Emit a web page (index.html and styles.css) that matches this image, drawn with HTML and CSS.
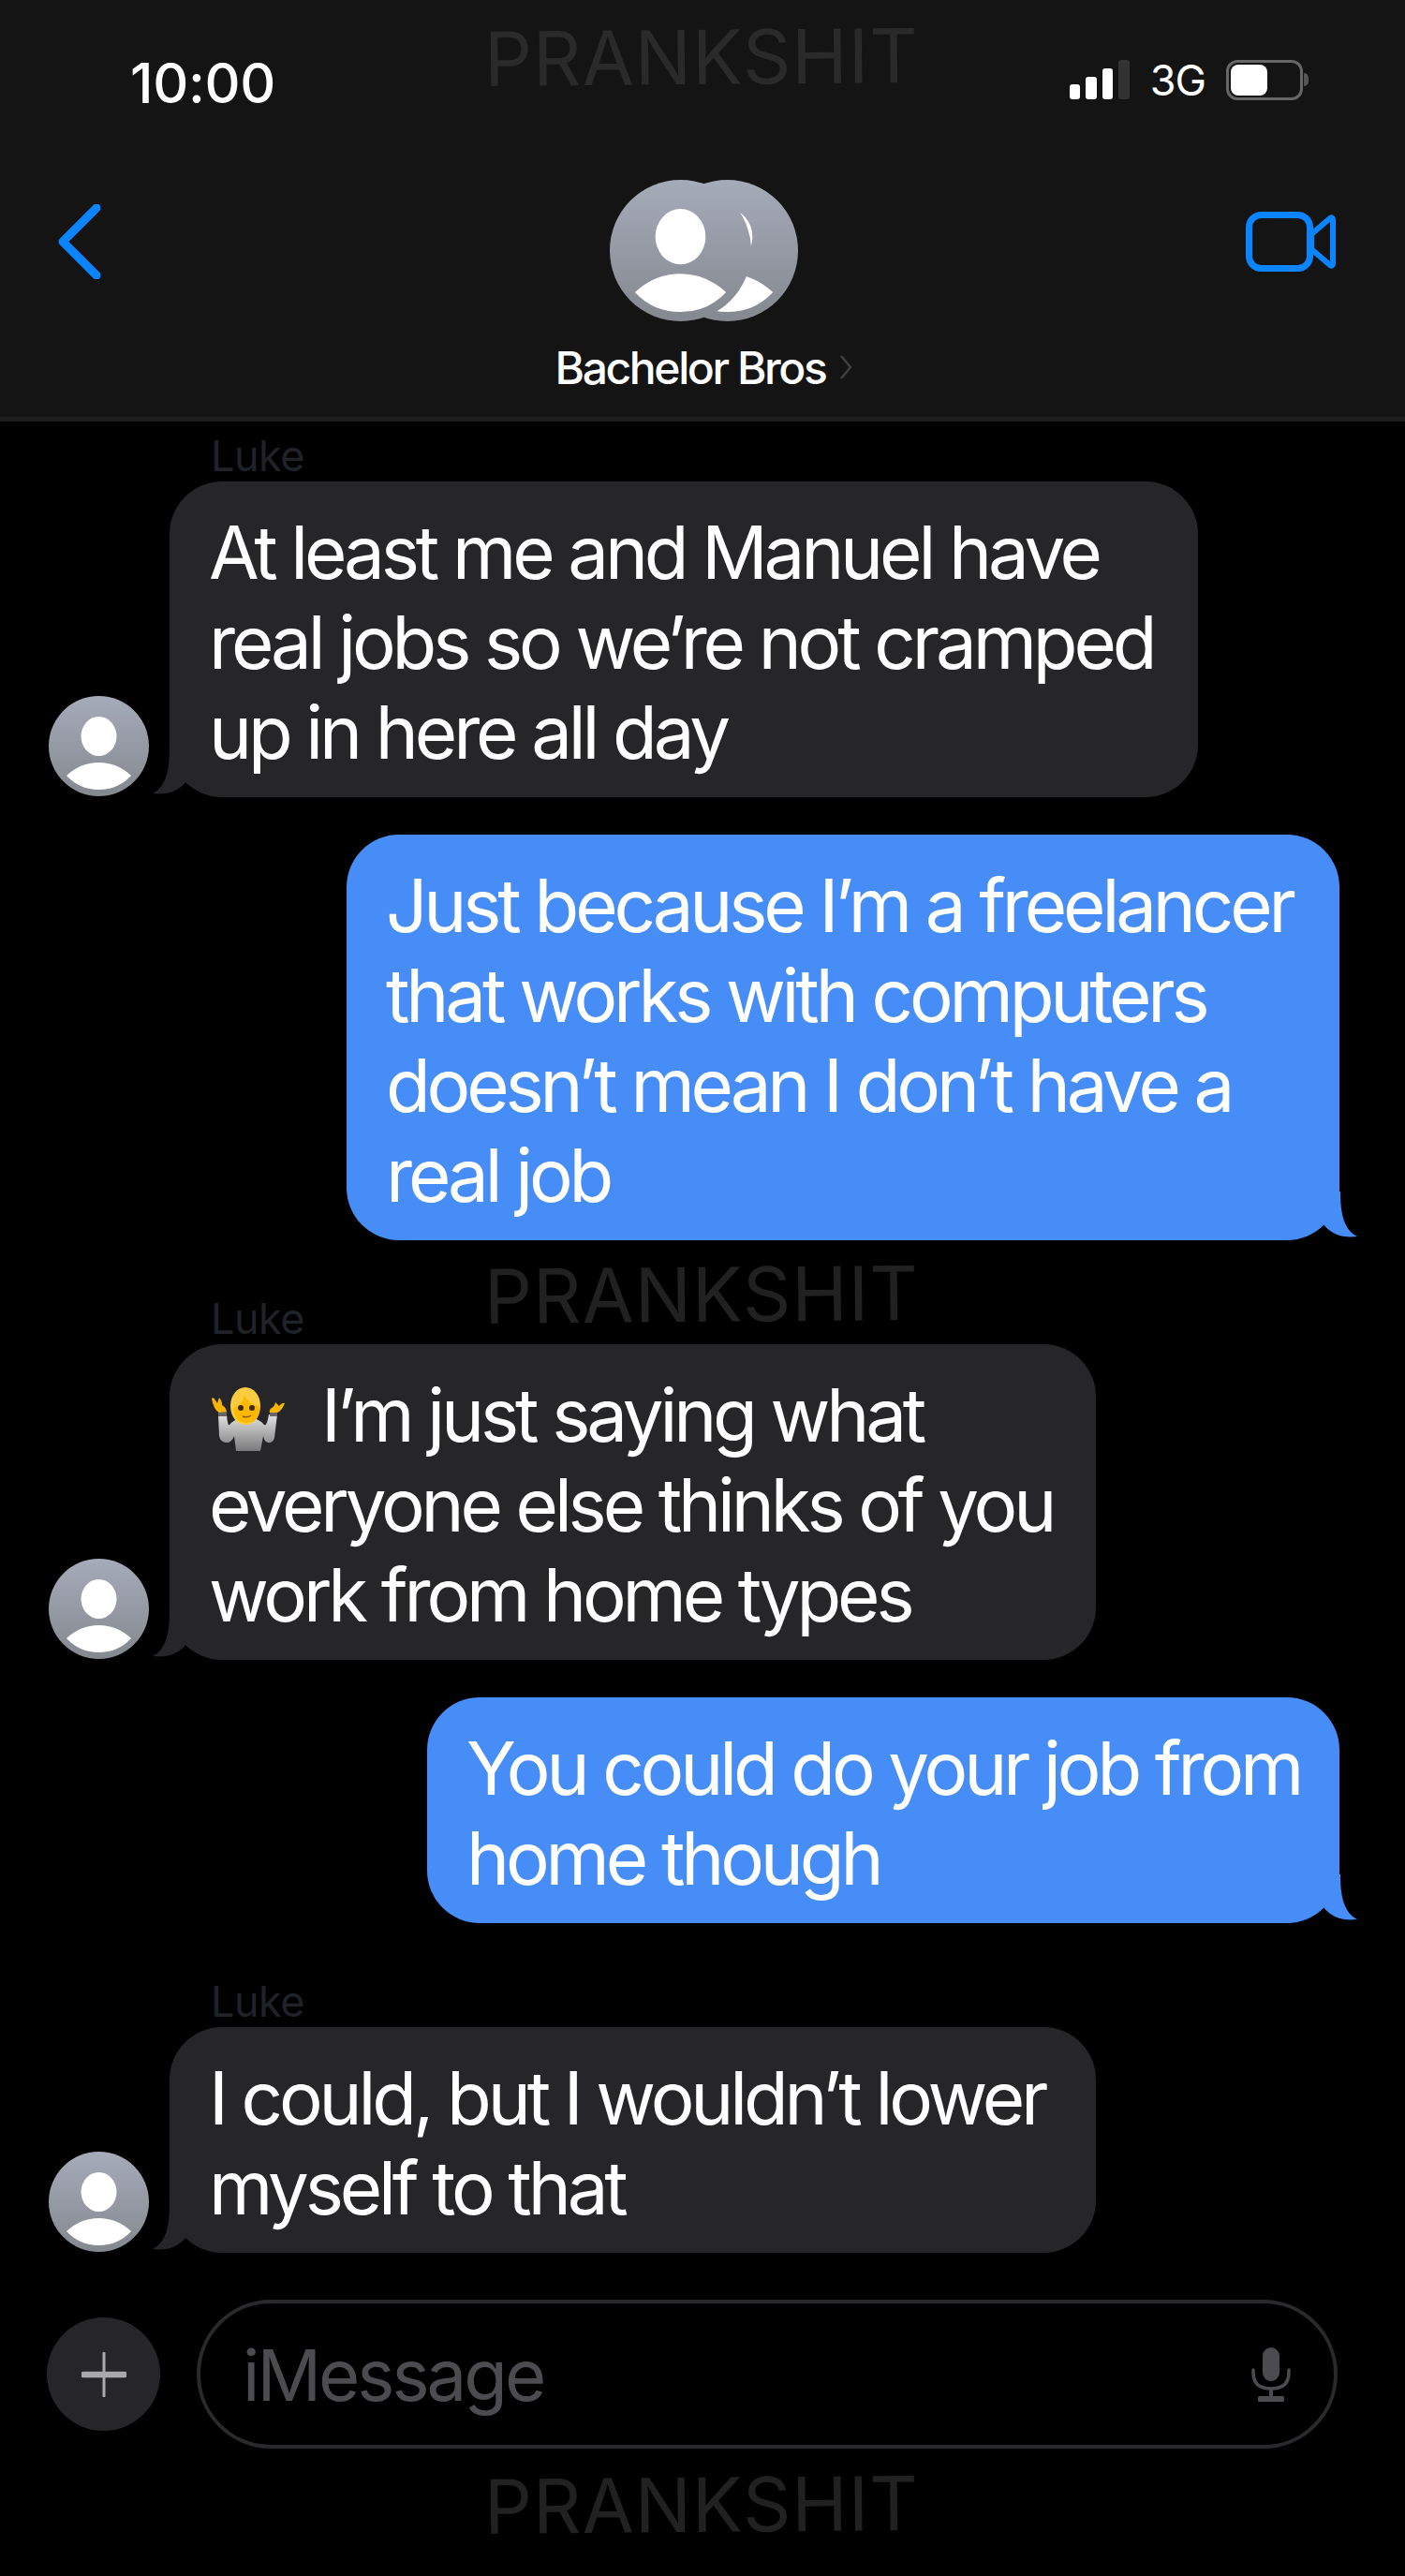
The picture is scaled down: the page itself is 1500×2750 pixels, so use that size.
FILE: index.html
```html
<!DOCTYPE html>
<html lang="en">
<head>
    <meta charset="UTF-8">
    <meta name="viewport" content="width=device-width, initial-scale=1.0">
    <title>Bachelor Bros</title>
    <link rel="stylesheet" href="styles.css">
</head>
<body>

    <!-- Shared drawings for the avatars and the bubble tail -->
    <svg class="defs" width="0" height="0">
        <defs>
            <linearGradient id="avatarFill" x1="0" y1="0" x2="0" y2="1">
                <stop offset="0" stop-color="#a6abb9"/>
                <stop offset="1" stop-color="#84888f"/>
            </linearGradient>
            <linearGradient id="sweater" x1="0" y1="0" x2="0" y2="1">
                <stop offset="0" stop-color="#e2e2e2"/>
                <stop offset="1" stop-color="#7a7a7a"/>
            </linearGradient>
            <symbol id="person" viewBox="0 0 107 107">
                <circle cx="53.5" cy="53.5" r="53.5" fill="url(#avatarFill)"/>
                <ellipse cx="53.5" cy="43" rx="19" ry="21" fill="#fff"/>
                <path d="M19 85 Q34 71 53.5 71 Q73 71 88 85 Q74 100 53.5 100 Q33 100 19 85 Z" fill="#fff"/>
            </symbol>
            <symbol id="tailShape" viewBox="0 0 50 50">
                <path d="M18 0 C18 24 14 41 0 48 C14 50 28 46 36 35 L50 20 L50 0 Z"/>
            </symbol>
        </defs>
    </svg>

    <div class="page">

        <header class="top">
            <div class="status">
                <span class="clock">10:00</span>
                <div class="status-right">
                    <div class="signal">
                        <i class="bar bar1"></i>
                        <i class="bar bar2"></i>
                        <i class="bar bar3"></i>
                        <i class="bar bar4"></i>
                    </div>
                    <span class="network">3G</span>
                    <div class="battery"><i class="battery-level"></i></div>
                    <i class="battery-nub"></i>
                </div>
            </div>

            <nav class="nav">
                <svg class="back" width="46" height="80" viewBox="0 0 46 80">
                    <path d="M41 4 L5 40 L41 76" fill="none" stroke="#0a84ff" stroke-width="9" stroke-linecap="round" stroke-linejoin="round"/>
                </svg>
                <div class="contact">
                    <svg width="201" height="151" viewBox="0 0 201 151">
                        <use href="#person" x="50" y="0" width="151" height="151"/>
                        <use href="#person" x="0" y="0" width="151" height="151"/>
                    </svg>
                    <div class="contact-name">
                        Bachelor Bros
                        <svg width="14" height="28" viewBox="0 0 14 28">
                            <path d="M2 2 L12 14 L2 26" fill="none" stroke="#3f3f3f" stroke-width="2.5"/>
                        </svg>
                    </div>
                </div>
                <svg class="video" width="96" height="64" viewBox="0 0 96 64">
                    <rect x="3.5" y="3.5" width="65" height="57" rx="13" fill="none" stroke="#0a84ff" stroke-width="7"/>
                    <path d="M70 24 L90 7 Q93 5 93 9 L93 55 Q93 59 90 57 L70 40 Z" fill="none" stroke="#0a84ff" stroke-width="6" stroke-linejoin="round"/>
                </svg>
            </nav>
        </header>

        <main class="thread">

            <div class="msg msg-in">
                <div class="sender">Luke</div>
                <div class="row">
                    <svg class="avatar"><use href="#person"/></svg>
                    <div class="bubble bubble-in width-a">
                        At least me and Manuel have<br>real jobs so we’re not cramped<br>up in here all day
                        <svg class="tail"><use href="#tailShape"/></svg>
                    </div>
                </div>
            </div>

            <div class="msg msg-out">
                <div class="bubble bubble-out width-b">
                    Just because I’m a freelancer<br>that works with computers<br>doesn’t mean I don’t have a<br>real job
                    <svg class="tail"><use href="#tailShape"/></svg>
                </div>
            </div>

            <div class="msg msg-in">
                <div class="sender">Luke</div>
                <div class="row">
                    <svg class="avatar"><use href="#person"/></svg>
                    <div class="bubble bubble-in width-c">
                        <svg class="shrug" width="80" height="70" viewBox="0 0 80 70">
                            <path d="M8 29 L17 29 Q18 42 20 40 Q27 32 39 32 Q50 32 57 40 Q60 42 62 29 L71 29 L68 54 Q66 60 61 59 Q57 58 56 52 L53 68 L27 68 L25 52 Q22 60 16 59 Q10 58 9 52 Z" fill="url(#sweater)"/>
                            <rect x="8" y="25" width="9" height="6" fill="#666"/>
                            <rect x="63" y="26" width="8" height="5" fill="#666"/>
                            <path d="M1 12 Q3 10 5 14 L7 17 L9 11 Q12 14 12 19 Q16 21 17 26 L9 27 Q3 24 1 12 Z" fill="#f7b500"/>
                            <path d="M79 17 Q76 16 73 20 L69 16 Q68 21 65 22 Q62 24 63 27 L71 27 Q76 25 79 17 Z" fill="#f7b500"/>
                            <ellipse cx="37" cy="20" rx="16" ry="20" fill="#f9cd3f"/>
                            <path d="M25 22 Q33 19 36 9 Q41 19 52 20 Q53 38 38 38 Q24 37 25 22 Z" fill="#fcb900"/>
                            <circle cx="32" cy="22" r="3" fill="#3a2a10"/>
                            <circle cx="44" cy="22" r="3" fill="#3a2a10"/>
                            <path d="M34 31 Q39 33 43 30" fill="none" stroke="#8a5a10" stroke-width="1.5"/>
                        </svg><span class="shrug-text">I’m just saying what</span><br>everyone else thinks of you<br>work from home types
                        <svg class="tail"><use href="#tailShape"/></svg>
                    </div>
                </div>
            </div>

            <div class="msg msg-out">
                <div class="bubble bubble-out width-d">
                    You could do your job from<br>home though
                    <svg class="tail"><use href="#tailShape"/></svg>
                </div>
            </div>

            <div class="msg msg-in">
                <div class="sender">Luke</div>
                <div class="row">
                    <svg class="avatar"><use href="#person"/></svg>
                    <div class="bubble bubble-in width-c">
                        I could, but I wouldn’t lower<br>myself to that
                        <svg class="tail"><use href="#tailShape"/></svg>
                    </div>
                </div>
            </div>

        </main>

        <footer class="composer">
            <div class="plus">
                <svg width="48" height="48" viewBox="0 0 48 48">
                    <path d="M24 1 V47" stroke="#a9a9a9" stroke-width="3" stroke-linecap="round"/>
                    <path d="M2 24 H46" stroke="#a9a9a9" stroke-width="6.5" stroke-linecap="round"/>
                </svg>
            </div>
            <div class="input">
                <span class="placeholder">iMessage</span>
                <svg width="42" height="58" viewBox="0 0 42 58">
                    <rect x="12" y="0" width="18" height="36" rx="9" fill="#4c4c50"/>
                    <path d="M2 24 V27 Q2 44 21 44 Q40 44 40 27 V24" fill="none" stroke="#4c4c50" stroke-width="3.5" stroke-linecap="round"/>
                    <path d="M21 44 V54" stroke="#4c4c50" stroke-width="4"/>
                    <rect x="7" y="52" width="28" height="6" rx="1.5" fill="#4c4c50"/>
                </svg>
            </div>
        </footer>

        <!-- Watermarks sit over the whole screenshot -->
        <div class="mark mark-top">PRANKSHIT</div>
        <div class="mark mark-mid">PRANKSHIT</div>
        <div class="mark mark-bottom">PRANKSHIT</div>

    </div>

</body>
</html>
```

FILE: styles.css
```css
/* General */

body {
    margin: 0;
    background-color: #000;
    color: #fff;
    font-family: Inter, "Liberation Sans", sans-serif;
}

.defs {
    position: absolute;
}

.page {
    position: relative;
    width: 1500px;
    height: 2750px;
    overflow: hidden;
}

/* Header */

.top {
    box-sizing: border-box;
    height: 450px;
    background-color: #141414;
    border-bottom: 5px solid #1d1d1d;
}

.status {
    display: flex;
    justify-content: space-between;
    align-items: center;
    height: 56px;
    padding: 60px 103px 0 139px;
}

.clock {
    font-size: 59px;
    font-weight: 500;
    letter-spacing: -0.3px;
}

.status-right {
    display: flex;
    align-items: center;
    margin-top: -6px;
}

.signal {
    display: flex;
    align-items: flex-end;
    gap: 6px;
    height: 42px;
}

.bar {
    display: block;
    width: 11.5px;
    border-radius: 3px;
    background-color: #fff;
}

.bar1 { height: 16px; }
.bar2 { height: 24px; }
.bar3 { height: 33px; }
.bar4 { height: 42px; background-color: #333; }

.network {
    margin-left: 22px;
    font-size: 45px;
    letter-spacing: -1px;
}

.battery {
    box-sizing: border-box;
    width: 82px;
    height: 43px;
    margin-left: 22px;
    padding: 2px;
    border: 3px solid #666;
    border-radius: 12px;
}

.battery-level {
    display: block;
    width: 39px;
    height: 100%;
    border-radius: 8px;
    background-color: #fff;
}

.battery-nub {
    display: block;
    width: 5px;
    height: 14px;
    margin-left: 1px;
    border-radius: 0 7px 7px 0;
    background-color: #555;
}

.nav {
    display: grid;
    grid-template-columns: 1fr auto 1fr;
    align-items: start;
    margin-top: 76px;
    padding: 0 74px 0 62px;
}

.back {
    margin-top: 26px;
}

.video {
    justify-self: end;
    margin-top: 34px;
}

.contact {
    display: flex;
    flex-direction: column;
    align-items: center;
    padding-left: 15px;
}

.contact-name {
    display: flex;
    align-items: center;
    gap: 15px;
    height: 56px;
    margin-top: 21px;
    font-size: 48px;
    font-weight: 500;
    letter-spacing: -2.4px;
}

/* Messages */

.thread {
    display: flex;
    flex-direction: column;
    gap: 40px;
    padding-top: 14px;
    font-size: 78px;
    line-height: 96px;
    letter-spacing: -4.15px;
}

.msg-in {
    padding-left: 52px;
}

.msg-in:not(:first-child) {
    margin-top: 21px;
}

.msg-out {
    display: flex;
    justify-content: flex-end;
    padding-right: 70px;
}

.sender {
    height: 50px;
    margin-left: 173px;
    margin-top: -2px;
    margin-bottom: 2px;
    font-size: 45px;
    line-height: 50px;
    letter-spacing: -0.5px;
    color: #1f2228;
}

.row {
    display: flex;
    align-items: flex-end;
    gap: 22px;
}

.avatar {
    flex: none;
    width: 107px;
    height: 107px;
    margin-bottom: 1px;
}

.bubble {
    position: relative;
    box-sizing: border-box;
    padding: 28px 0 21px 42px;
    border-radius: 56px;
    white-space: nowrap;
}

.bubble-in {
    background-color: #262628;
}

.bubble-out {
    background-color: #478df8;
}

.width-a { width: 1098px; }
.width-b { width: 1060px; }
.width-c { width: 989px; }
.width-d { width: 974px; }

.tail {
    position: absolute;
    bottom: 2px;
    width: 50px;
    height: 50px;
}

.bubble-in .tail {
    left: -18px;
    fill: #262628;
}

.bubble-out .tail {
    right: -19px;
    fill: #478df8;
    transform: scaleX(-1);
}

.shrug {
    margin-right: 38px;
    margin-left: 2px;
    vertical-align: -12px;
}

/* Composer */

.composer {
    display: flex;
    align-items: center;
    gap: 39px;
    margin-top: 50px;
    padding-left: 50px;
}

.plus {
    display: flex;
    justify-content: center;
    align-items: center;
    width: 121px;
    height: 121px;
    border-radius: 50%;
    background-color: #262628;
}

.input {
    box-sizing: border-box;
    display: flex;
    justify-content: space-between;
    align-items: center;
    width: 1218px;
    height: 159px;
    padding: 0 46px 0 45px;
    border: 4px solid #2a2a2c;
    border-radius: 80px;
}

.placeholder {
    font-size: 76px;
    letter-spacing: -3px;
    color: #4c4c50;
}

/* Watermarks */

.mark {
    position: absolute;
    left: 517px;
    font-size: 80px;
    line-height: 80px;
    letter-spacing: 1px;
    transform: rotate(-0.5deg);
}

.mark-top {
    top: 21px;
    color: #2a2a2a;
}

.mark-mid {
    top: 1342px;
    color: #212121;
}

.mark-bottom {
    top: 2634px;
    color: #212121;
}
```
